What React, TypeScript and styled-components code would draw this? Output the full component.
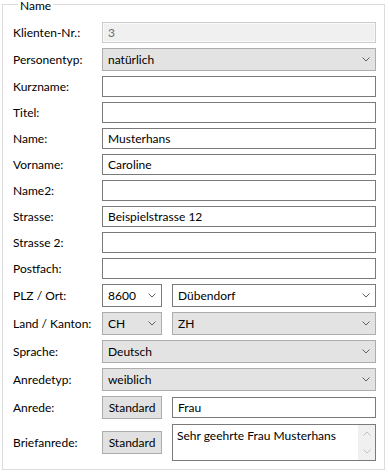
import React from "react";
import styled, { createGlobalStyle } from "styled-components";

const GlobalStyle = createGlobalStyle`
  html, body {
    margin: 0;
    padding: 0;
    background: #ffffff;
  }
  body {
    font-family: Lato, "Noto Sans", sans-serif;
    font-size: 12px;
    color: #000000;
  }
`;

const GroupBox = styled.fieldset`
  box-sizing: border-box;
  width: 383px;
  margin: 0 0 0 2px;
  padding: 13px 8px 8px 10px;
  border: 1px solid #dcdcdc;
  min-width: 0;
`;

const Legend = styled.legend`
  margin-left: 5px;
  padding: 0 2px;
  height: 9px;
  line-height: 11px;
  font-size: 12px;
`;

const Form = styled.div`
  display: flex;
  flex-direction: column;
  gap: 5px;
`;

const Row = styled.div`
  display: grid;
  grid-template-columns: 89px 1fr;
  align-items: center;
`;

const Label = styled.span`
  line-height: 15px;
  white-space: nowrap;
`;

const TextBox = styled.input<{ $disabled?: boolean }>`
  box-sizing: border-box;
  width: 100%;
  height: 21px;
  margin: 0;
  padding: 0 5px;
  font: inherit;
  color: ${(p) => (p.$disabled ? "#6d6d6d" : "#000000")};
  background: ${(p) => (p.$disabled ? "#f0f0f0" : "#ffffff")};
  border: 1px solid ${(p) => (p.$disabled ? "#cccccc" : "#7a7a7a")};
  box-shadow: ${(p) => (p.$disabled ? "inset 0 0 0 1px #fafafa" : "none")};
  outline: none;
`;

const Combo = styled.div<{ $editable?: boolean }>`
  box-sizing: border-box;
  height: 23px;
  display: flex;
  align-items: center;
  justify-content: space-between;
  padding: 0 5px;
  background: ${(p) => (p.$editable ? "#ffffff" : "#e3e3e3")};
  border: 1px solid ${(p) => (p.$editable ? "#7a7a7a" : "#adadad")};
`;

const Pair = styled.div`
  display: grid;
  grid-template-columns: 60px 1fr;
  column-gap: 10px;
  align-items: center;
`;

const Button = styled.button`
  box-sizing: border-box;
  height: 23px;
  margin: 0;
  padding: 0;
  font: inherit;
  color: #000000;
  background: #e1e1e1;
  border: 1px solid #adadad;
`;

const Memo = styled.div`
  box-sizing: border-box;
  height: 37px;
  display: flex;
  border: 1px solid #7a7a7a;
  background: #ffffff;
`;

const MemoText = styled.div`
  flex: 1;
  padding: 3px 4px;
  line-height: 15px;
`;

const ScrollBar = styled.div`
  width: 17px;
  display: flex;
  flex-direction: column;
  background: #f0f0f0;
`;

const ScrollButton = styled.div`
  flex: 1;
  display: flex;
  align-items: center;
  justify-content: center;
`;

const Chevron: React.FC<{ up?: boolean; color?: string }> = ({ up, color = "#606060" }) => (
  <svg width="8" height="5" viewBox="0 0 8 5">
    <path
      d={up ? "M0.5 4.5 L4 1 L7.5 4.5" : "M0.5 0.5 L4 4 L7.5 0.5"}
      stroke={color}
      strokeWidth="1"
      fill="none"
    />
  </svg>
);

const Select: React.FC<{ value?: string; editable?: boolean }> = ({ value, editable }) => (
  <Combo $editable={editable}>
    <span>{value}</span>
    <Chevron />
  </Combo>
);

const App: React.FC = () => {
  const textRows: [string, string][] = [
    ["Kurzname:", ""],
    ["Titel:", ""],
    ["Name:", "Musterhans"],
    ["Vorname:", "Caroline"],
    ["Name2:", ""],
    ["Strasse:", "Beispielstrasse 12"],
    ["Strasse 2:", ""],
    ["Postfach:", ""],
  ];

  return (
    <>
      <GlobalStyle />
      <GroupBox>
        <Legend>Name</Legend>
        <Form>
          <Row>
            <Label>Klienten-Nr.:</Label>
            <TextBox $disabled readOnly defaultValue="3" />
          </Row>
          <Row>
            <Label>Personentyp:</Label>
            <Select value="natürlich" />
          </Row>
          {textRows.map(([label, value]) => (
            <Row key={label}>
              <Label>{label}</Label>
              <TextBox readOnly defaultValue={value} />
            </Row>
          ))}
          <Row>
            <Label>PLZ / Ort:</Label>
            <Pair>
              <Select value="8600" editable />
              <Select value="Dübendorf" editable />
            </Pair>
          </Row>
          <Row>
            <Label>Land / Kanton:</Label>
            <Pair>
              <Select value="CH" />
              <Select value="ZH" />
            </Pair>
          </Row>
          <Row>
            <Label>Sprache:</Label>
            <Select value="Deutsch" />
          </Row>
          <Row>
            <Label>Anredetyp:</Label>
            <Select value="weiblich" />
          </Row>
          <Row>
            <Label>Anrede:</Label>
            <Pair>
              <Button>Standard</Button>
              <TextBox readOnly defaultValue="Frau" />
            </Pair>
          </Row>
          <Row>
            <Label>Briefanrede:</Label>
            <Pair>
              <Button>Standard</Button>
              <Memo>
                <MemoText>Sehr geehrte Frau Musterhans</MemoText>
                <ScrollBar>
                  <ScrollButton>
                    <Chevron up color="#c2c2c2" />
                  </ScrollButton>
                  <ScrollButton>
                    <Chevron color="#c2c2c2" />
                  </ScrollButton>
                </ScrollBar>
              </Memo>
            </Pair>
          </Row>
        </Form>
      </GroupBox>
    </>
  );
};

export default App;
